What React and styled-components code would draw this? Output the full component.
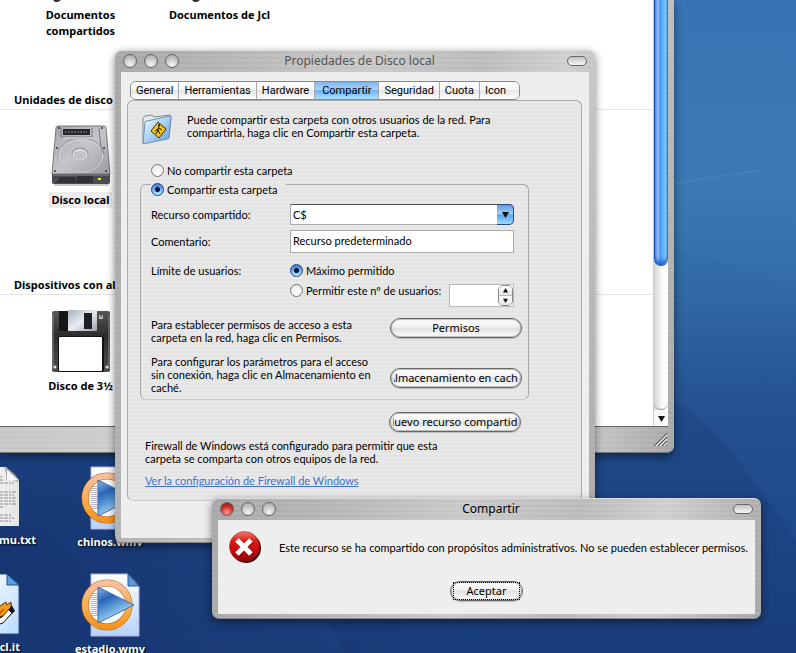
import React, { useState } from 'react';
import styled, { createGlobalStyle, css } from 'styled-components';

const tabs = ['General', 'Herramientas', 'Hardware', 'Compartir', 'Seguridad', 'Cuota', 'Icon'];

export default function App() {
  const [tab, setTab] = useState('Compartir');
  const [shared, setShared] = useState('yes');
  const [limit, setLimit] = useState('max');

  return (
    <Desktop>
      <GlobalStyle />
      <Wallpaper viewBox="0 0 796 653" preserveAspectRatio="none" aria-hidden="true">
        <path d="M674 184 Q740 172 796 170 L796 290 Q730 262 674 250Z" fill="#4a8fbe" opacity=".08" />
        <path d="M674 184 Q720 174 765 170" fill="none" stroke="#8fc0e6" opacity=".2" />
        <path d="M674 400 Q720 430 745 470 L796 540 L796 653 L345 653 Q335 630 325 618 L500 440Z" fill="#102a68" opacity=".18" />
      </Wallpaper>

      <DesktopItem $x="-30px" $y="466px" $align="flex-end">
        <TextFileIcon />
        <DesktopLabel $shift="16px">mu.txt</DesktopLabel>
      </DesktopItem>
      <DesktopItem $x="-30px" $y="573px" $align="flex-end">
        <WinampIcon />
        <DesktopLabel>cl.it</DesktopLabel>
      </DesktopItem>
      <DesktopItem $x="70px" $y="466px">
        <VideoIcon />
        <DesktopLabel>chinos.wmv</DesktopLabel>
      </DesktopItem>
      <DesktopItem $x="70px" $y="573px">
        <VideoIcon />
        <DesktopLabel>estadio.wmv</DesktopLabel>
      </DesktopItem>

      <Explorer>
        <ExplorerBody>
          <Files>
            <FileRow>
              <FileItem>
                <IconTip />
                <FileName>
                  Documentos
                  <br />
                  compartidos
                </FileName>
              </FileItem>
              <FileItem>
                <IconTip />
                <FileName>Documentos de Jcl</FileName>
              </FileItem>
            </FileRow>
            <GroupTitle>Unidades de disco duro</GroupTitle>
            <FileRow $tall>
              <FileItem>
                <HardDiskIcon />
                <FileName $selected>Disco local</FileName>
              </FileItem>
            </FileRow>
            <GroupTitle>Dispositivos con almacenamiento</GroupTitle>
            <FileRow $tall>
              <FileItem>
                <FloppyIcon />
                <FileName>Disco de 3½</FileName>
              </FileItem>
            </FileRow>
          </Files>
          <ScrollBar>
            <ScrollTrack>
              <ScrollThumb />
            </ScrollTrack>
            <ScrollButton type="button" aria-label="Bajar">
              <Arrow down size={7} />
            </ScrollButton>
          </ScrollBar>
        </ExplorerBody>
        <ExplorerFooter>
          <Grip />
        </ExplorerFooter>
      </Explorer>

      <PropertiesWindow>
        <TitleBar $inactive>
          <TitleButton type="button" aria-label="Cerrar" />
          <TitleButton type="button" aria-label="Minimizar" />
          <TitleButton type="button" aria-label="Maximizar" />
          <Title>Propiedades de Disco local</Title>
          <Pill type="button" aria-label="Barra" />
        </TitleBar>
        <PropertiesBody>
          <TabBar role="tablist">
            {tabs.map((name) => (
              <Tab key={name} type="button" role="tab" aria-selected={tab === name} $active={tab === name} onClick={() => setTab(name)}>
                {name}
              </Tab>
            ))}
          </TabBar>
          <Panel>
            <Intro>
              <SharedFolderIcon />
              <p>
                Puede compartir esta carpeta con otros usuarios de la red. Para
                <br />
                compartirla, haga clic en Compartir esta carpeta.
              </p>
            </Intro>
            <Option $indent>
              <Radio name="shared" checked={shared === 'no'} onChange={() => setShared('no')} />
              No compartir esta carpeta
            </Option>
            <Group>
              <GroupLegend>
                <Option>
                  <Radio name="shared" checked={shared === 'yes'} onChange={() => setShared('yes')} />
                  Compartir esta carpeta
                </Option>
              </GroupLegend>
              <Field>
                <FieldLabel htmlFor="resource">Recurso compartido:</FieldLabel>
                <SelectBox>
                  <Select id="resource" defaultValue="C$">
                    <option>C$</option>
                  </Select>
                  <SelectCap>
                    <Arrow down size={7} />
                  </SelectCap>
                </SelectBox>
              </Field>
              <Field>
                <FieldLabel htmlFor="comment">Comentario:</FieldLabel>
                <TextInput id="comment" defaultValue="Recurso predeterminado" />
              </Field>
              <LimitField>
                <FieldLabel as="span">Límite de usuarios:</FieldLabel>
                <Option>
                  <Radio name="limit" checked={limit === 'max'} onChange={() => setLimit('max')} />
                  Máximo permitido
                </Option>
              </LimitField>
              <CountField>
                <Option>
                  <Radio name="limit" checked={limit === 'some'} onChange={() => setLimit('some')} />
                  Permitir este nº de usuarios:
                </Option>
                <Stepper>
                  <NumberInput type="number" aria-label="Número de usuarios" />
                  <StepButtons>
                    <StepButton type="button" aria-label="Más">
                      <Arrow size={5} />
                    </StepButton>
                    <StepButton type="button" aria-label="Menos">
                      <Arrow down size={5} />
                    </StepButton>
                  </StepButtons>
                </Stepper>
              </CountField>
              <Action>
                <p>
                  Para establecer permisos de acceso a esta
                  <br />
                  carpeta en la red, haga clic en Permisos.
                </p>
                <Button type="button">
                  <span>Permisos</span>
                </Button>
              </Action>
              <Action $low>
                <p>
                  Para configurar los parámetros para el acceso
                  <br />
                  sin conexión, haga clic en Almacenamiento en
                  <br />
                  caché.
                </p>
                <Button type="button">
                  <span>Almacenamiento en caché</span>
                </Button>
              </Action>
            </Group>
            <NewShare>
              <Button type="button">
                <span>Nuevo recurso compartido</span>
              </Button>
            </NewShare>
            <Firewall>
              <p>
                Firewall de Windows está configurado para permitir que esta
                <br />
                carpeta se comparta con otros equipos de la red.
              </p>
              <a href="#firewall">Ver la configuración de Firewall de Windows</a>
            </Firewall>
          </Panel>
        </PropertiesBody>
      </PropertiesWindow>

      <AlertWindow role="alertdialog" aria-label="Compartir">
        <TitleBar>
          <TitleButton type="button" aria-label="Cerrar" $red />
          <TitleButton type="button" aria-label="Minimizar" />
          <TitleButton type="button" aria-label="Maximizar" />
          <Title>Compartir</Title>
          <Pill type="button" aria-label="Barra" />
        </TitleBar>
        <AlertBody>
          <Message>
            <ErrorIcon />
            <p>Este recurso se ha compartido con propósitos administrativos. No se pueden establecer permisos.</p>
          </Message>
          <Button type="button" $focused>
            <span>Aceptar</span>
          </Button>
        </AlertBody>
      </AlertWindow>
    </Desktop>
  );
}

function Arrow({ down, size }) {
  return (
    <svg width={size} height={size} viewBox="0 0 8 8" aria-hidden="true">
      <path d={down ? 'M0 1h8L4 8z' : 'M0 7h8L4 0z'} fill="#111" />
    </svg>
  );
}

function Grip() {
  return (
    <svg width="15" height="15" viewBox="0 0 15 15" aria-hidden="true">
      <path d="M1 14L14 1M5 14l9-9M9 14l5-5M13 14l1-1" stroke="#555" />
      <path d="M3 14L14 3M7 14l7-7M11 14l3-3" stroke="#eee" />
    </svg>
  );
}

function IconTip() {
  return (
    <svg width="60" height="2" viewBox="0 0 60 2" aria-hidden="true">
      <path d="M2 0h8l-3 2h-3z" fill="#333" />
    </svg>
  );
}

function HardDiskIcon() {
  return (
    <svg width="60" height="62" viewBox="0 0 60 62" aria-hidden="true">
      <defs>
        <linearGradient id="hdTop" x1="0" y1="0" x2="1" y2="1">
          <stop offset="0" stopColor="#a4a4aa" />
          <stop offset=".5" stopColor="#c6c6ca" />
          <stop offset="1" stopColor="#9b9ba1" />
        </linearGradient>
      </defs>
      <path d="M1 57h58l-2 4H4z" fill="#000" opacity=".2" />
      <path d="M7 1h46q2 0 2 2l4 46H1L5 3q0-2 2-2z" fill="url(#hdTop)" stroke="#77777d" />
      <path d="M1 49h58v8q0 2-2 2H3q-2 0-2-2z" fill="#4b4b52" />
      <path d="M2 50h56" stroke="#85858c" />
      <path d="M9 52h15l2 6H5z" fill="#303036" />
      <path d="M27 51v7M29 51v7M31 51v7M33 51v7M35 51v7M37 51v7M39 51v7M41 51v7" stroke="#17171b" />
      <ellipse cx="30" cy="30" rx="23" ry="17" fill="none" stroke="#96969c" />
      <ellipse cx="30" cy="31" rx="22" ry="16" fill="none" stroke="#d6d6da" />
      <ellipse cx="29" cy="29" rx="8" ry="6" fill="#c3c3c7" stroke="#8d8d93" />
      <ellipse cx="29" cy="30" rx="7" ry="5" fill="none" stroke="#eee" />
      <rect x="12" y="4" width="27" height="6" fill="#26262b" />
      <path d="M14 7h22" stroke="#888" strokeDasharray="2 1" />
      <path d="M10 3v9h31V3M48 3l2 20 3 6" fill="none" stroke="#77777d" />
      <path d="M12 13h29" stroke="#e2e2e5" />
      <g fill="#333338">
        <circle cx="8" cy="3" r="1" />
        <circle cx="51" cy="3" r="1" />
        <circle cx="6" cy="23" r="1" />
        <circle cx="53" cy="23" r="1" />
        <circle cx="4" cy="46" r="1" />
        <circle cx="55" cy="46" r="1" />
      </g>
      <rect x="47" y="53" width="3" height="2" fill="#d8f024" />
    </svg>
  );
}

function FloppyIcon() {
  return (
    <svg width="60" height="63" viewBox="0 0 60 63" aria-hidden="true">
      <defs>
        <linearGradient id="shutter" x1="0" y1="0" x2="1" y2="1">
          <stop offset="0" stopColor="#a9b0b8" />
          <stop offset=".5" stopColor="#e8ecf0" />
          <stop offset="1" stopColor="#9aa1a8" />
        </linearGradient>
        <linearGradient id="floppy" x1="0" y1="0" x2="0" y2="1">
          <stop offset="0" stopColor="#565656" />
          <stop offset=".4" stopColor="#2d2d2d" />
          <stop offset="1" stopColor="#4d4d4d" />
        </linearGradient>
      </defs>
      <path d="M3 1h54q2 0 2 3v56q0 2-2 2H3q-2 0-2-2V3q0-2 2-2z" fill="url(#floppy)" />
      <path d="M2 59V4M58 59V5" stroke="#8a8a8a" />
      <rect x="8" y="1" width="9" height="20" fill="#151515" />
      <rect x="17" y="0" width="29" height="21" rx="1" fill="url(#shutter)" />
      <rect x="33" y="3" width="8" height="16" fill="#1c1f24" />
      <rect x="48" y="5" width="4" height="4" fill="#bbb" />
      <path d="M49 6h2" stroke="#333" />
      <rect x="7" y="26" width="46" height="36" rx="2" fill="#111" />
      <rect x="8" y="27" width="43" height="34" rx="1" fill="#fff" />
      <circle cx="4" cy="57" r="1.5" fill="#ddd" />
      <circle cx="56" cy="57" r="1.5" fill="#ddd" />
    </svg>
  );
}

function SharedFolderIcon() {
  return (
    <svg width="32" height="32" viewBox="0 0 32 32" aria-hidden="true">
      <defs>
        <linearGradient id="folder" x1="0" y1="0" x2="1" y2="1">
          <stop offset="0" stopColor="#f4fafe" />
          <stop offset=".4" stopColor="#b9daf5" />
          <stop offset="1" stopColor="#5a9be0" />
        </linearGradient>
      </defs>
      <path d="M1 30V6q0-2 2-3l7-1 2 2 16-2 1 2-2 20z" fill="#e4eaee" stroke="#7d8a94" />
      <path d="M1 31L3 9q0-1 2-1l23-5q1 0 1 1l-2 20q0 2-2 2z" fill="url(#folder)" stroke="#6b8fb5" />
      <path d="M16 9l8 7-7 9-8-7z" fill="#f3c61c" stroke="#3a2e05" />
      <path d="M17 13l-1 4 2 4M16 16l-3 2M16 17l-2 4M17 15l3 2" stroke="#111" fill="none" />
      <circle cx="17" cy="12" r="1" fill="#111" />
    </svg>
  );
}

function TextFileIcon() {
  return (
    <svg width="50" height="62" viewBox="0 0 50 62" aria-hidden="true">
      <defs>
        <linearGradient id="sheet" x1="0" y1="0" x2="1" y2="0">
          <stop offset="0" stopColor="#fff" />
          <stop offset="1" stopColor="#e4e4e4" />
        </linearGradient>
      </defs>
      <path d="M0 1h36l13 13v46H0z" fill="url(#sheet)" />
      <path d="M34 1q3 6 2 13 7-1 13 2-1-5-6-9-5-5-9-6z" fill="#a8a8a8" />
      <path d="M37 4v10h11" fill="#f8f8f8" />
      <path d="M4 11h28M4 14h30M4 17h40M4 26h42M4 29h40M4 32h42M4 35h41M4 38h42M4 41h30M4 49h38M4 52h40M4 55h38" stroke="#8c8c8c" strokeDasharray="4 1 2 1 6 1" />
    </svg>
  );
}

function WinampIcon() {
  return (
    <svg width="50" height="62" viewBox="0 0 50 62" aria-hidden="true">
      <defs>
        <linearGradient id="amp" x1="0" y1="0" x2="1" y2="1">
          <stop offset="0" stopColor="#fff" />
          <stop offset="1" stopColor="#bcdcff" />
        </linearGradient>
      </defs>
      <path d="M0 1h37l12 12v48H0z" fill="url(#amp)" stroke="#27508f" />
      <path d="M37 1v11h12z" fill="#5b9cdc" stroke="#27508f" />
      <path d="M20 55l8-2 6-5 11-10-4-7-7 4-14 6z" fill="#111" />
      <path d="M24 53l9-3 9-10-4-4-6 8-10 4z" fill="#fff" stroke="#111" />
      <path d="M20 45l13-2 8-9v-5l-4 3-1-3-6 4-3-4-7 6z" fill="#f59b14" stroke="#5a3300" />
      <path d="M24 38l5 3 5-5" stroke="#c56d05" strokeWidth="2" fill="none" />
    </svg>
  );
}

function VideoIcon() {
  return (
    <svg width="60" height="64" viewBox="0 0 60 64" aria-hidden="true">
      <defs>
        <linearGradient id="videoPage" x1="0" y1="0" x2="0" y2="1">
          <stop offset="0" stopColor="#fdfeff" />
          <stop offset="1" stopColor="#b5d3fb" />
        </linearGradient>
        <linearGradient id="videoRing" x1="0" y1="0" x2="0" y2="1">
          <stop offset="0" stopColor="#f8c0a0" />
          <stop offset=".45" stopColor="#fbb25c" />
          <stop offset="1" stopColor="#f7941d" />
        </linearGradient>
        <linearGradient id="videoPlay" x1="0" y1="0" x2=".5" y2="1">
          <stop offset="0" stopColor="#88b8ea" />
          <stop offset=".35" stopColor="#2a66b4" />
          <stop offset=".6" stopColor="#5b9bd8" />
          <stop offset="1" stopColor="#c9ecff" />
        </linearGradient>
      </defs>
      <path d="M11 1h37l11 12v50H11z" fill="url(#videoPage)" stroke="#b9b0e0" />
      <path d="M48 1v12h11z" fill="#5d97d2" stroke="#2c5a9c" />
      <circle cx="27" cy="32" r="20" fill="#fff" opacity=".85" />
      <path d="M15 20v24" stroke="#b4b4c4" strokeWidth="8" strokeDasharray="1 1" />
      <circle cx="27" cy="32" r="22" fill="none" stroke="#b9660c" strokeWidth="7" />
      <circle cx="27" cy="32" r="22" fill="none" stroke="url(#videoRing)" strokeWidth="6" />
      <path d="M18 14L54 32 18 50z" fill="url(#videoPlay)" stroke="#3c6eae" />
    </svg>
  );
}

function ErrorIcon() {
  return (
    <svg width="32" height="32" viewBox="0 0 32 32" aria-hidden="true">
      <defs>
        <linearGradient id="error" x1="0" y1="0" x2="0" y2="1">
          <stop offset="0" stopColor="#f08070" />
          <stop offset=".3" stopColor="#e01c1c" />
          <stop offset=".7" stopColor="#c00808" />
          <stop offset="1" stopColor="#8a0404" />
        </linearGradient>
      </defs>
      <circle cx="17" cy="17" r="15" fill="#2a0808" />
      <circle cx="15.5" cy="15.5" r="15" fill="url(#error)" stroke="#a01010" strokeWidth=".5" />
      <path d="M9 10L23 24M23 10L9 24" stroke="#600" strokeWidth="5" opacity=".6" />
      <path d="M8 9L22 23M22 9L8 23" stroke="#fff" strokeWidth="5" />
    </svg>
  );
}

const GlobalStyle = createGlobalStyle`
  * {
    box-sizing: border-box;
  }

  body {
    margin: 0;
    overflow: hidden;
    color: #000;
    font-family: Lato, 'Liberation Sans', sans-serif;
    font-size: 11px;
    line-height: 13px;
  }

  p {
    margin: 0;
  }

  svg {
    display: block;
    flex: none;
  }
`;

const metal = css`
  background-color: #b4b4b4;
  background-image: repeating-linear-gradient(
      rgba(255, 255, 255, 0.08) 0 1px,
      transparent 1px 3px,
      rgba(0, 0, 0, 0.02) 3px 4px,
      rgba(255, 255, 255, 0.05) 4px 5px
    ),
    linear-gradient(100deg, #a8a8a8 0%, #b6b6b6 20%, #cacaca 45%, #bcbcbc 65%, #d0d0d0 80%, #a8a8a8 100%);
`;

const Desktop = styled.main`
  position: relative;
  height: 100vh;
  overflow: hidden;
  background: radial-gradient(ellipse at 0% 85%, rgba(16, 42, 100, 0.6), transparent 45%),
    linear-gradient(#3873b3 0%, #3b79b4 28%, #3068a4 46%, #24518f 62%, #1f4a8a 80%, #1d4280 100%);
`;

const Wallpaper = styled.svg`
  position: absolute;
  inset: 0;
  width: 100%;
  height: 100%;
`;

const DesktopItem = styled.div`
  position: absolute;
  left: ${({ $x }) => $x};
  top: ${({ $y }) => $y};
  display: flex;
  flex-direction: column;
  align-items: ${({ $align }) => $align || 'center'};
  gap: 4px;
  min-width: ${({ $align }) => ($align ? '50px' : '80px')};
`;

const DesktopLabel = styled.span`
  margin-right: -${({ $shift }) => $shift || '0px'};
  color: #fff;
  font: bold 11px/16px 'Open Sans', sans-serif;
  text-shadow: 1px 1px 2px #000;
`;

const windowShadow = '0 3px 8px rgba(0, 0, 0, 0.5)';

const Explorer = styled.section`
  position: absolute;
  top: 0;
  left: 0;
  right: 122px;
  padding-right: 6px;
  border-radius: 0 0 7px 0;
  border-bottom: 1px solid #777;
  box-shadow: ${windowShadow};
  ${metal}
`;

const ExplorerBody = styled.div`
  display: flex;
  border-bottom: 1px solid #666;
  background: #fff;
`;

const Files = styled.div`
  flex: 1;
  padding-bottom: 17px;
  overflow: hidden;
`;

const FileRow = styled.div`
  display: flex;
  height: ${({ $tall }) => ($tall ? '114px' : 'auto')};
  padding: ${({ $tall }) => ($tall ? '15px 0 0 11px' : '0 0 0 11px')};
`;

const FileItem = styled.div`
  display: flex;
  flex-direction: column;
  align-items: center;
  gap: 5px;
  width: 139px;
`;

const FileName = styled.span`
  padding: 0 3px;
  background: ${({ $selected }) => ($selected ? '#ececec' : 'transparent')};
  font: bold 11px/16px 'Noto Sans', sans-serif;
  text-align: center;
  white-space: nowrap;
`;

const GroupTitle = styled.h2`
  margin: 52px 0 0;
  padding-left: 14px;
  border-bottom: 1px solid #e4e4e4;
  font: bold 11px/18px 'Noto Sans', sans-serif;
`;

const ScrollBar = styled.div`
  display: flex;
  flex-direction: column;
  width: 15px;
  border-left: 1px solid #ccc;
  background: linear-gradient(90deg, #d4d4d4, #fafafa 60%, #fff);
`;

const ScrollTrack = styled.div`
  flex: 1;
  border-bottom: 1px solid #999;
  border-radius: 0 0 7px 7px;
`;

const ScrollThumb = styled.div`
  height: 65%;
  border: 1px solid #1a4fc0;
  border-top: 0;
  border-right-color: #49708c;
  border-radius: 0 0 7px 7px;
  background: linear-gradient(90deg, #6f9ce6 0%, #a9c9f4 25%, #4d95ee 40%, #5fb0fa 65%, #9be6ff 90%);
  box-shadow: inset 0 -3px 4px #1a62d8;
`;

const ScrollButton = styled.button`
  display: flex;
  align-items: center;
  justify-content: center;
  height: 16px;
  padding: 0;
  border: 0;
  background: #f8f8f8;
`;

const ExplorerFooter = styled.div`
  display: flex;
  align-items: center;
  justify-content: flex-end;
  height: 25px;
  background: linear-gradient(90deg, rgba(255, 255, 255, 0.3), rgba(255, 255, 255, 0.2) 80%, transparent);
`;

const Frame = styled.section`
  position: absolute;
  padding: 0 6px 5px;
  border-radius: 7px;
  box-shadow: ${windowShadow}, inset 0 1px 0 #ddd, inset 0 -1px 0 #888;
  ${metal}
`;

const PropertiesWindow = styled(Frame)`
  top: 50px;
  left: 115px;
  right: 201px;
  min-width: 470px;
`;

const AlertWindow = styled(Frame)`
  top: 498px;
  left: 212px;
  right: 35px;
  min-width: 540px;
`;

const TitleBar = styled.header`
  display: flex;
  align-items: center;
  gap: 7px;
  height: 22px;
  padding: 0 2px;
  color: ${({ $inactive }) => ($inactive ? '#555' : '#000')};
`;

const TitleButton = styled.button`
  width: 14px;
  height: 14px;
  padding: 0;
  border: 1px solid #666;
  border-radius: 50%;
  background: ${({ $red }) =>
    $red ? 'radial-gradient(circle at 50% 80%, #ff9a90, #d02a28 55%, #7a1010)' : 'radial-gradient(circle at 50% 80%, #f4f4f4, #c6c6c6 55%, #a0a0a0)'};
`;

const Title = styled.h1`
  flex: 1;
  margin: 0;
  padding-right: 27px;
  font: normal 12px/22px 'Noto Sans', sans-serif;
  text-align: center;
`;

const Pill = styled.button`
  width: 20px;
  height: 10px;
  padding: 0;
  border: 1px solid #666;
  border-radius: 5px;
  background: linear-gradient(#c4c4c4, #f4f4f4);
`;

const PropertiesBody = styled.div`
  padding: 9px 7px 37px 6px;
  background: #eee;
`;

const TabBar = styled.div`
  display: flex;
  width: fit-content;
  height: 19px;
  margin-left: 3px;
  border: 1px solid #888;
  border-radius: 6px;
  overflow: hidden;
`;

const Tab = styled.button`
  padding: 1px ${({ $active }) => ($active ? '7px' : '5px')} 0;
  border: 0;
  border-right: 1px solid #aaa;
  background: ${({ $active }) =>
    $active ? 'linear-gradient(#7db4ee, #a9d3fa 45%, #68b2f5 50%, #a8e2ff)' : 'linear-gradient(#fff, #f6f6f6 45%, #e6e6e6 50%, #fdfdfd)'};
  color: #000;
  font: 11px/16px Roboto, sans-serif;

  &:last-child {
    padding-right: 13px;
    border-right: 0;
  }
`;

const stripes = 'repeating-linear-gradient(#e8e8e8 0 2px, #e4e4e4 2px 4px)';

const Panel = styled.div`
  padding: 12px 52px 13px 12px;
  border: 1px solid #aaa;
  border-bottom-color: #ccc;
  border-radius: 6px;
  background: ${stripes};
  white-space: nowrap;
`;

const Intro = styled.div`
  display: flex;
  gap: 13px;
  padding-left: 2px;
`;

const Option = styled.label`
  display: flex;
  align-items: center;
  gap: 3px;
  width: fit-content;
  margin: ${({ $indent }) => ($indent ? '19px 0 0 11px' : '0')};
`;

const Radio = styled.input.attrs({ type: 'radio' })`
  appearance: none;
  width: 13px;
  height: 13px;
  margin: 0;
  border: 1px solid #777;
  border-radius: 50%;
  background: radial-gradient(circle at 50% 75%, #fff, #e4e4e4);

  &:checked {
    border-color: #23407c;
    background: radial-gradient(circle, #06102c 0 2px, transparent 3px), linear-gradient(#3f7ad0, #6cb0f5 50%, #b6ecff);
  }
`;

const Group = styled.fieldset`
  min-width: 0;
  margin: 1px 0 0;
  padding: 14px 6px 5px 10px;
  border: 1px solid #aaa;
  border-bottom-color: #ccc;
  border-radius: 6px;
`;

const GroupLegend = styled.legend`
  height: 12px;
  padding: 5px 9px 0 0;
`;

const Field = styled.div`
  display: flex;
  align-items: center;
  margin: 0 8px 5px 0;
`;

const FieldLabel = styled.label`
  flex: 0 0 139px;
`;

const fieldFont = css`
  color: #000;
  font: 11px/13px Lato, 'Liberation Sans', sans-serif;
`;

const SelectBox = styled.div`
  position: relative;
  flex: 1;
`;

const Select = styled.select`
  appearance: none;
  display: block;
  width: 100%;
  height: 21px;
  padding: 0 20px 0 2px;
  border: 1px solid #aaa;
  border-top-color: #555;
  border-radius: 0 5px 5px 0;
  background: #fff;
  ${fieldFont}
`;

const SelectCap = styled.span`
  position: absolute;
  inset: 0 0 0 auto;
  display: flex;
  align-items: center;
  justify-content: center;
  width: 17px;
  border: 1px solid #2a4a86;
  border-left: 0;
  border-radius: 0 5px 5px 0;
  background: linear-gradient(#5d9be0, #a4cff8 45%, #5aa5f0 52%, #9fdcff);
  pointer-events: none;
`;

const TextInput = styled.input`
  flex: 1;
  min-width: 0;
  height: 23px;
  padding: 0 2px 3px;
  border: 1px solid #aaa;
  background: #fff;
  ${fieldFont}
`;

const LimitField = styled(Field)`
  margin-top: 11px;
  margin-bottom: 7px;
`;

const CountField = styled(Field)`
  align-items: flex-start;
  justify-content: space-between;
  margin-bottom: 11px;
  padding-left: 139px;
`;

const Stepper = styled.div`
  display: flex;
  width: 65px;
  height: 23px;
  border: 1px solid #bbb;
  background: #fff;
`;

const NumberInput = styled.input`
  appearance: textfield;
  flex: 1;
  min-width: 0;
  padding: 0 3px;
  border: 0;
  background: transparent;
  ${fieldFont}
`;

const StepButtons = styled.div`
  display: flex;
  flex-direction: column;
  width: 15px;
  border: 1px solid #888;
  border-radius: 5px;
  overflow: hidden;
`;

const StepButton = styled.button`
  display: flex;
  flex: 1;
  align-items: center;
  justify-content: center;
  padding: 0;
  border: 0;
  background: linear-gradient(#fff, #e4e4e4);

  & + & {
    border-top: 1px solid #bbb;
  }
`;

const Action = styled.div`
  display: flex;
  align-items: flex-start;
  justify-content: space-between;

  & + & {
    margin-top: 11px;
  }

  button {
    margin-top: ${({ $low }) => ($low ? '13px' : '0')};
  }
`;

const Button = styled.button`
  display: flex;
  flex: none;
  align-items: center;
  justify-content: center;
  width: ${({ $focused }) => ($focused ? '73px' : '132px')};
  height: 20px;
  padding: 0 3px;
  border: 1px solid #666;
  border-radius: 10px;
  background: linear-gradient(#fff, #f0f0f0 45%, #e0e0e0 50%, #fff);
  box-shadow: inset 0 0 1px 1px #bbb, 0 1px 1px #bbb;
  color: #000;
  font: 11px/16px 'Noto Sans', sans-serif;

  span {
    display: flex;
    justify-content: center;
    width: 100%;
    overflow: hidden;
    outline: ${({ $focused }) => ($focused ? '1px dotted #000' : '0')};
    white-space: nowrap;
  }
`;

const NewShare = styled.div`
  display: flex;
  justify-content: flex-end;
  padding: 12px 8px 0 0;
`;

const Firewall = styled.div`
  padding: 7px 0 0 5px;

  a {
    display: block;
    width: fit-content;
    margin-top: 9px;
    color: #3c73d0;
  }
`;

const AlertBody = styled.div`
  display: flex;
  flex-direction: column;
  align-items: center;
  gap: 18px;
  padding: 11px 8px 13px;
  background: #eee;
`;

const Message = styled.div`
  display: flex;
  align-items: center;
  gap: 18px;
  width: 100%;
  padding-left: 3px;
  white-space: nowrap;
`;
